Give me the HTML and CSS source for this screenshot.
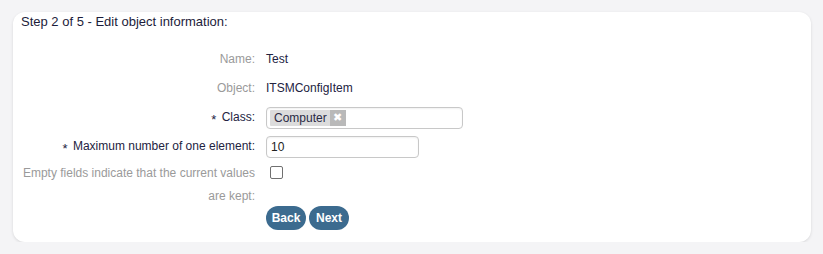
FILE: index.html
```html
<!DOCTYPE html>
<html>
<head>
<meta charset="utf-8">
<link rel="stylesheet" href="styles.css">
</head>
<body>
<div class="card">
  <h2 class="title">Step 2 of 5 - Edit object information:</h2>
  <div class="form">
    <div class="label">Name:</div>
    <div class="value">Test</div>

    <div class="label">Object:</div>
    <div class="value">ITSMConfigItem</div>

    <div class="label req"><span class="star">*</span> Class:</div>
    <div class="value">
      <div class="input input-class">
        <span class="tag">Computer<span class="tag-x">&#10006;</span></span>
      </div>
    </div>

    <div class="label req"><span class="star">*</span> Maximum number of one element:</div>
    <div class="value">
      <div class="input input-max">10</div>
    </div>

    <div class="label wrap">Empty fields indicate that the current values are kept:</div>
    <div class="value check-cell"><input type="checkbox" class="check"></div>

    <div class="value buttons">
      <button class="btn">Back</button>
      <button class="btn">Next</button>
    </div>
  </div>
</div>
</body>
</html>
```

FILE: styles.css
```css
html, body {
  margin: 0;
  padding: 0;
  background: #f4f4f6;
  font-family: "Liberation Sans", Arial, sans-serif;
  font-size: 12px;
  color: #23233f;
}

.card {
  margin: 12px 0 0 13px;
  width: 798px;
  height: 230px;
  box-sizing: border-box;
  background: #fff;
  border-radius: 12px;
  box-shadow: 0 1px 3px rgba(0, 0, 0, 0.12);
}

.title {
  margin: 0;
  padding: 0 8px;
  height: 20px;
  line-height: 20px;
  font-size: 13px;
  font-weight: normal;
  color: #1c1c3a;
}

.form {
  margin-top: 13px;
  display: grid;
  grid-template-columns: 242px 1fr;
  grid-template-rows: 29px 29px 29px 29px 43px 26px;
  column-gap: 11px;
}

.label {
  text-align: right;
  line-height: 29px;
  color: #9a9a9a;
}

.label.req {
  color: #23233f;
}

.star {
  display: inline-block;
  font-size: 13px;
  vertical-align: -3px;
  margin-right: 2px;
}

.label.wrap {
  grid-row: 5 / span 2;
  line-height: 23px;
  padding-top: 1px;
  padding-left: 8px;
}

.value {
  line-height: 29px;
  display: flex;
  align-items: center;
}

.input {
  box-sizing: border-box;
  height: 22px;
  border: 1px solid #c8c8c8;
  border-radius: 4px;
  box-shadow: inset 0 1px 2px rgba(0, 0, 0, 0.06);
  display: flex;
  align-items: center;
  padding: 0 3px;
  line-height: 16px;
}

.input-class {
  width: 197px;
}

.input-max {
  width: 153px;
  padding-left: 4px;
  color: #222;
}

.tag {
  display: inline-flex;
  align-items: center;
  height: 16px;
  background: #dcdcdc;
  padding-left: 4px;
  color: #2a2a44;
  font-size: 12px;
  border-radius: 1px;
}

.tag-x {
  display: inline-flex;
  align-items: center;
  justify-content: center;
  width: 16px;
  height: 16px;
  margin-left: 3px;
  background: #b9b9b9;
  color: #fff;
  font-size: 11px;
  font-weight: bold;
  font-family: "DejaVu Sans", sans-serif;
}

.check-cell {
  grid-column: 2;
  grid-row: 5;
  align-items: flex-start;
}

.check {
  appearance: none;
  -webkit-appearance: none;
  box-sizing: border-box;
  width: 13px;
  height: 13px;
  margin: 5px 0 0 4px;
  border: 1px solid #707070;
  border-radius: 2px;
  background: #fff;
}

.buttons {
  grid-column: 2;
  grid-row: 6;
  align-items: flex-start;
  gap: 3px;
  padding-top: 2px;
}

.btn {
  height: 24px;
  width: 40px;
  padding: 0;
  border: none;
  border-radius: 12px;
  background: #3c6b8f;
  color: #fff;
  font-family: "Liberation Sans", Arial, sans-serif;
  font-size: 12px;
  font-weight: bold;
}
```
